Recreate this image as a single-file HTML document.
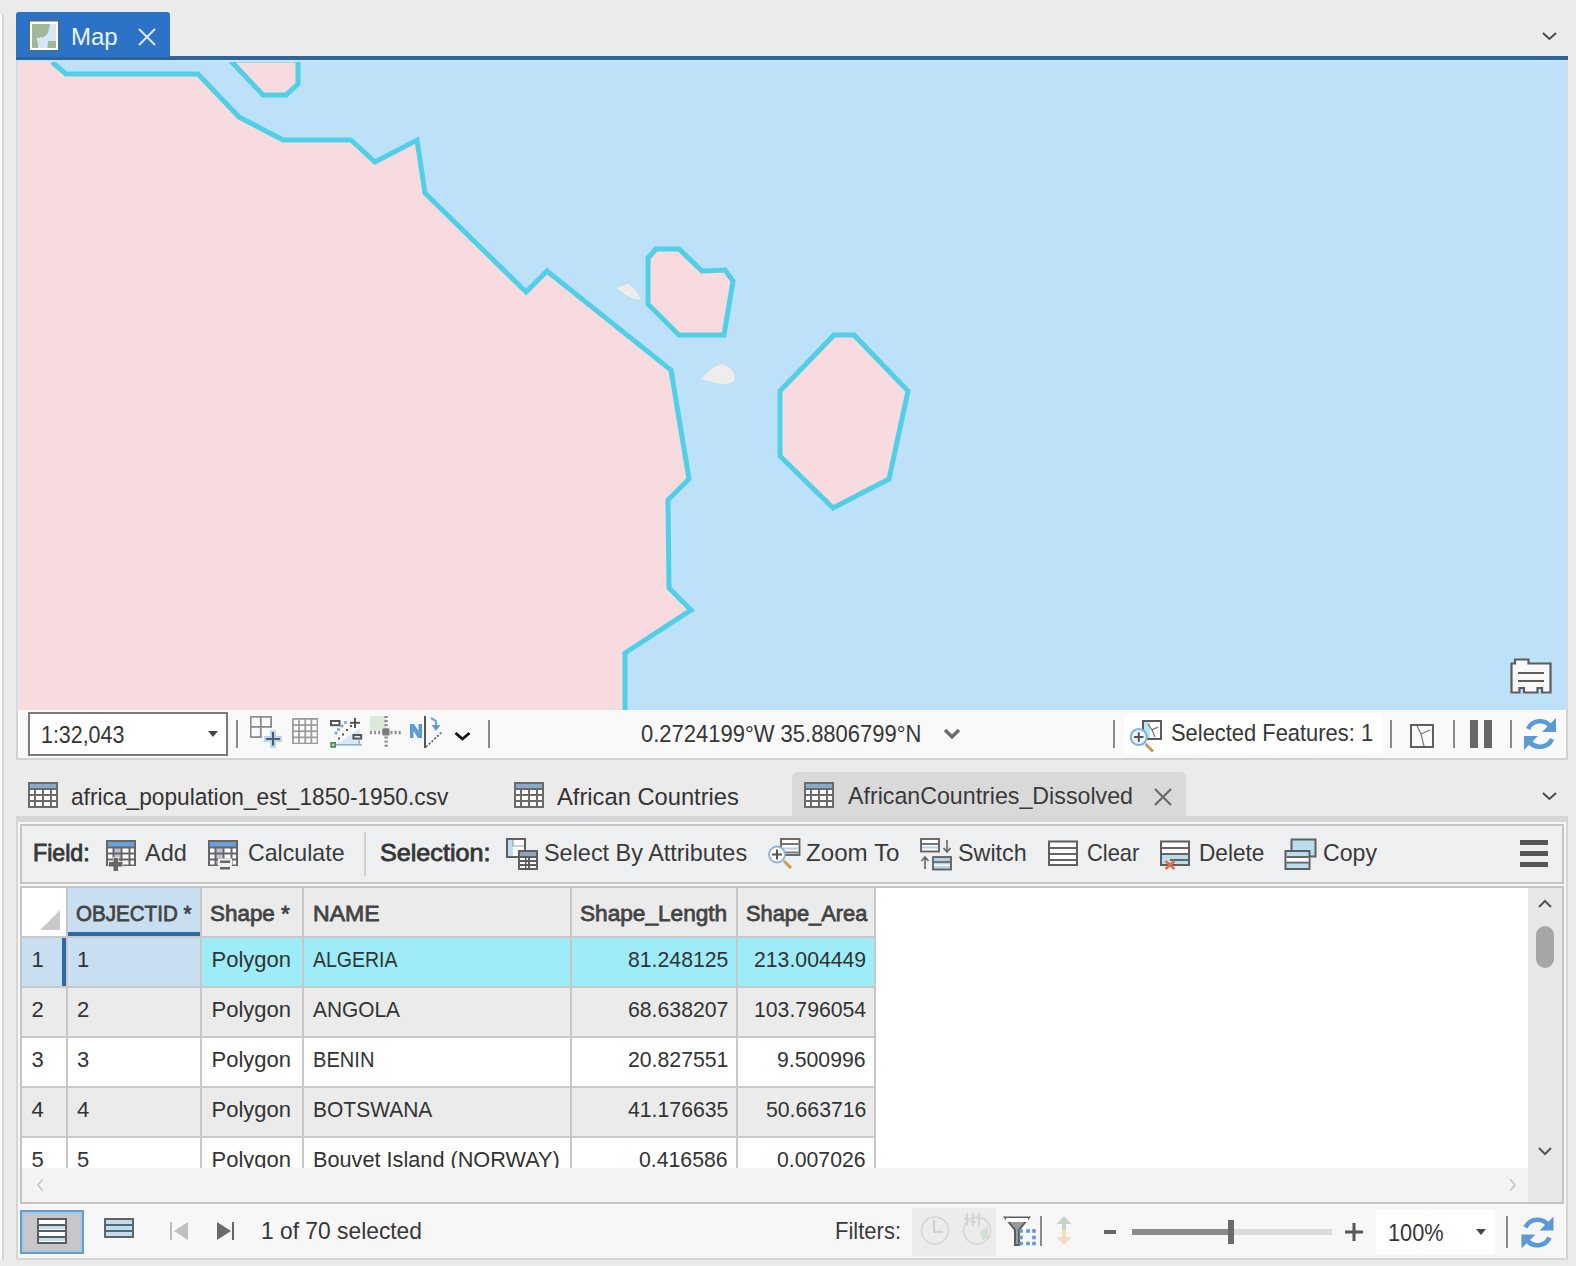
<!DOCTYPE html>
<html><head><meta charset="utf-8"><style>
html,body{margin:0;padding:0;width:1576px;height:1266px;overflow:hidden;background:#ebebeb;position:relative;font-family:"Liberation Sans",sans-serif;}
div{position:absolute;box-sizing:border-box;}
.t{position:absolute;white-space:pre;transform-origin:0 0;font-family:"Liberation Sans",sans-serif;}
svg{position:absolute;}
</style></head><body>
<div style="left:0px;top:14px;width:2px;height:1246px;background:#f8f8f8;"></div>
<div style="left:2px;top:14px;width:2px;height:1246px;background:#d5d5d5;"></div>
<div style="left:16px;top:56px;width:1552px;height:4px;background:#2f639c;"></div>
<div style="left:16px;top:12px;width:154px;height:46px;background:#2c72c6;border-radius:3px 3px 0 0;"></div>
<div style="left:16px;top:57px;width:154px;height:3px;background:#2f639c;"></div>
<svg style="position:absolute;left:0px;top:0px" width="64" height="60" viewBox="0 0 64 60"><rect x="28.5" y="18.5" width="31" height="33" fill="#4a6a92"/><rect x="30" y="21.5" width="28" height="28.5" fill="#fbfdff"/><rect x="32" y="24" width="24" height="24" fill="#9fb898"/><path d="M50,24 L56,24 L56,41 L48,41 L47.5,48 L38,48 L38,44 L36.5,38 L44,37 L48,33 Z" fill="#d6e6f6"/></svg>
<span class="t" style="left:71.00px;top:24.78px;font-size:24.5px;line-height:24.5px;color:#eef5fc;transform:scaleX(0.9792);">Map</span>
<svg style="position:absolute;left:137px;top:27px" width="20" height="20" viewBox="0 0 20 20"><path d="M2 2 L18 18 M18 2 L2 18" stroke="#dce8f6" stroke-width="2" fill="none"/></svg>
<svg style="position:absolute;left:1542px;top:32px" width="15" height="10" viewBox="0 0 15 10"><path d="M1 1 L7.5 7 L14 1" stroke="#4a4a4a" stroke-width="2" fill="none"/></svg>
<div style="left:16px;top:60px;width:1552px;height:650px;background:#d3dde6;"></div>
<div style="left:18px;top:60px;width:1548px;height:2px;background:#c6e6f8;"></div>
<svg style="position:absolute;left:18px;top:62px" width="1548" height="648" viewBox="18 62 1548 648">
<rect x="18" y="62" width="1548" height="648" fill="#bde1f9"/>
<polygon points="18,62 52,62 66,74 198,74 239,117 283,140 351,140 375,162 417,140 425,193 526,292 547,271 671,370 689,479 668,500 669,588 691,610 625,653 625,712 18,712" fill="#f7dbdf"/>
<polyline points="52,62 66,74 198,74 239,117 283,140 351,140 375,162 417,140 425,193 526,292 547,271 671,370 689,479 668,500 669,588 691,610 625,653 625,712" fill="none" stroke="#50cfe6" stroke-width="5" stroke-linejoin="miter"/>
<polygon points="230,60 263,95 286,95 298,84 298,60" fill="#f7dbdf" stroke="#50cfe6" stroke-width="5"/>
<polygon points="648,258 656,249 679,249 702,271 725,270 733,281 724,335 679,335 648,304" fill="#f7dbdf" stroke="#50cfe6" stroke-width="5"/>
<polygon points="834,335 854,335 908,391 889,479 833,508 780,456 780,391" fill="#f7dbdf" stroke="#50cfe6" stroke-width="5"/>
<path d="M616,288 L628,284 Q636,288 641,300 L633,299 Q624,294 616,288 Z" fill="#eeede9"/>
<path d="M701,379 Q712,366 722,364 Q735,368 735,380 Q728,386 716,383 Z" fill="#eeede9"/>
</svg>
<svg style="position:absolute;left:1510px;top:658px" width="42" height="36" viewBox="0 0 42 36"><path d="M1.5 5.5 H5 V1.5 H18.5 V5.5 H40.5 V34.5 H32 V30 H27.5 V34.5 H14 V30 H9.5 V34.5 H1.5 Z" fill="#f8f8f8" stroke="#5c5c5c" stroke-width="2.2"/><path d="M8 15 H34 M8 23 H34" stroke="#5c5c5c" stroke-width="2.2"/></svg>
<div style="left:16px;top:710px;width:1552px;height:50px;background:#d2d2d2;"></div>
<div style="left:18px;top:710px;width:1548px;height:48px;background:#f9f9f9;"></div>
<div style="left:28px;top:712px;width:200px;height:44px;background:#7a7a7a;"></div>
<div style="left:30px;top:714px;width:196px;height:40px;background:#ffffff;"></div>
<span class="t" style="left:41.00px;top:723.17px;font-size:24.5px;line-height:24.5px;color:#333;transform:scaleX(0.8737);">1:32,043</span>
<svg style="position:absolute;left:208px;top:731px" width="10" height="6" viewBox="0 0 10 6"><path d="M0 0 H10 L5 6 Z" fill="#444"/></svg>
<div style="left:236px;top:720px;width:2px;height:28px;background:#8a8a8a;"></div>
<div style="left:488px;top:720px;width:2px;height:28px;background:#8a8a8a;"></div>
<span class="t" style="left:641.00px;top:722.17px;font-size:24.5px;line-height:24.5px;color:#363636;transform:scaleX(0.8974);">0.2724199°W 35.8806799°N</span>
<svg style="position:absolute;left:943px;top:728px" width="18" height="12" viewBox="0 0 18 12"><path d="M2 2 L9 9 L16 2" stroke="#666" stroke-width="3.2" fill="none"/></svg>
<div style="left:1113px;top:720px;width:2px;height:28px;background:#8a8a8a;"></div>
<div style="left:1124px;top:714px;width:258px;height:40px;background:#ffffff;"></div>
<span class="t" style="left:1171.00px;top:720.67px;font-size:24.5px;line-height:24.5px;color:#363636;transform:scaleX(0.8938);">Selected Features: 1</span>
<div style="left:1390px;top:720px;width:2px;height:28px;background:#8a8a8a;"></div>
<div style="left:1453px;top:720px;width:2px;height:28px;background:#8a8a8a;"></div>
<div style="left:1510px;top:720px;width:2px;height:28px;background:#8a8a8a;"></div>
<div style="left:1470px;top:720px;width:8px;height:28px;background:#686868;"></div>
<div style="left:1484px;top:720px;width:8px;height:28px;background:#686868;"></div>
<div style="left:792px;top:772px;width:394px;height:44px;background:#d9d9d9;border-radius:5px 5px 0 0;"></div>
<svg style="position:absolute;left:28px;top:782px" width="30" height="26" viewBox="0 0 30 26"><rect x="0" y="0" width="30" height="26" fill="#6b6b6b"/><rect x="2" y="2" width="26" height="4" fill="#88a9c8"/><g fill="#fff"><rect x="2" y="8" width="4" height="4"/><rect x="8" y="8" width="6" height="4"/><rect x="16" y="8" width="6" height="4"/><rect x="24" y="8" width="4" height="4"/><rect x="2" y="14" width="4" height="4"/><rect x="8" y="14" width="6" height="4"/><rect x="16" y="14" width="6" height="4"/><rect x="24" y="14" width="4" height="4"/><rect x="2" y="20" width="4" height="4"/><rect x="8" y="20" width="6" height="4"/><rect x="16" y="20" width="6" height="4"/><rect x="24" y="20" width="4" height="4"/></g></svg>
<span class="t" style="left:71.00px;top:784.67px;font-size:24.5px;line-height:24.5px;color:#333;transform:scaleX(0.9265);">africa_population_est_1850-1950.csv</span>
<svg style="position:absolute;left:514px;top:782px" width="30" height="26" viewBox="0 0 30 26"><rect x="0" y="0" width="30" height="26" fill="#6b6b6b"/><rect x="2" y="2" width="26" height="4" fill="#88a9c8"/><g fill="#fff"><rect x="2" y="8" width="4" height="4"/><rect x="8" y="8" width="6" height="4"/><rect x="16" y="8" width="6" height="4"/><rect x="24" y="8" width="4" height="4"/><rect x="2" y="14" width="4" height="4"/><rect x="8" y="14" width="6" height="4"/><rect x="16" y="14" width="6" height="4"/><rect x="24" y="14" width="4" height="4"/><rect x="2" y="20" width="4" height="4"/><rect x="8" y="20" width="6" height="4"/><rect x="16" y="20" width="6" height="4"/><rect x="24" y="20" width="4" height="4"/></g></svg>
<span class="t" style="left:557.00px;top:784.67px;font-size:24.5px;line-height:24.5px;color:#333;transform:scaleX(0.9681);">African Countries</span>
<svg style="position:absolute;left:804px;top:782px" width="30" height="26" viewBox="0 0 30 26"><rect x="0" y="0" width="30" height="26" fill="#6b6b6b"/><rect x="2" y="2" width="26" height="4" fill="#88a9c8"/><g fill="#fff"><rect x="2" y="8" width="4" height="4"/><rect x="8" y="8" width="6" height="4"/><rect x="16" y="8" width="6" height="4"/><rect x="24" y="8" width="4" height="4"/><rect x="2" y="14" width="4" height="4"/><rect x="8" y="14" width="6" height="4"/><rect x="16" y="14" width="6" height="4"/><rect x="24" y="14" width="4" height="4"/><rect x="2" y="20" width="4" height="4"/><rect x="8" y="20" width="6" height="4"/><rect x="16" y="20" width="6" height="4"/><rect x="24" y="20" width="4" height="4"/></g></svg>
<span class="t" style="left:848.00px;top:784.17px;font-size:24.5px;line-height:24.5px;color:#3a3a3a;transform:scaleX(0.9468);">AfricanCountries_Dissolved</span>
<svg style="position:absolute;left:1153px;top:787px" width="20" height="20" viewBox="0 0 20 20"><path d="M2 2 L18 18 M18 2 L2 18" stroke="#6a6a6a" stroke-width="2.2" fill="none"/></svg>
<svg style="position:absolute;left:1542px;top:792px" width="15" height="10" viewBox="0 0 15 10"><path d="M1 1 L7.5 7 L14 1" stroke="#4a4a4a" stroke-width="2" fill="none"/></svg>
<div style="left:16px;top:816px;width:1552px;height:444px;background:#d4d6d8;"></div>
<div style="left:18px;top:822px;width:1548px;height:436px;background:#f7f7f7;"></div>
<div style="left:20px;top:824px;width:1544px;height:60px;background:#c4c4c4;"></div>
<div style="left:22px;top:826px;width:1540px;height:56px;background:#eeeff0;"></div>
<span class="t" style="left:33.00px;top:841.10px;font-size:24px;line-height:24px;color:#363636;-webkit-text-stroke:0.84px #363636;transform:scaleX(0.9661);">Field:</span>
<span class="t" style="left:145.00px;top:841.10px;font-size:24px;line-height:24px;color:#3a3a3a;transform:scaleX(0.9767);">Add</span>
<span class="t" style="left:247.50px;top:841.10px;font-size:24px;line-height:24px;color:#3a3a3a;transform:scaleX(0.9650);">Calculate</span>
<div style="left:364px;top:832px;width:2px;height:44px;background:#cfcfcf;"></div>
<span class="t" style="left:380.00px;top:841.10px;font-size:24px;line-height:24px;color:#363636;-webkit-text-stroke:0.84px #363636;transform:scaleX(1.0476);">Selection:</span>
<span class="t" style="left:544.00px;top:841.10px;font-size:24px;line-height:24px;color:#3a3a3a;transform:scaleX(0.9760);">Select By Attributes</span>
<span class="t" style="left:805.50px;top:841.10px;font-size:24px;line-height:24px;color:#3a3a3a;transform:scaleX(1.0054);">Zoom To</span>
<span class="t" style="left:958.00px;top:841.10px;font-size:24px;line-height:24px;color:#3a3a3a;transform:scaleX(0.9718);">Switch</span>
<span class="t" style="left:1087.00px;top:841.10px;font-size:24px;line-height:24px;color:#3a3a3a;transform:scaleX(0.9123);">Clear</span>
<span class="t" style="left:1199.00px;top:841.10px;font-size:24px;line-height:24px;color:#3a3a3a;transform:scaleX(0.9420);">Delete</span>
<span class="t" style="left:1323.00px;top:841.10px;font-size:24px;line-height:24px;color:#3a3a3a;transform:scaleX(0.9643);">Copy</span>
<div style="left:1520px;top:840px;width:28px;height:5px;background:#555;"></div>
<div style="left:1520px;top:851px;width:28px;height:5px;background:#555;"></div>
<div style="left:1520px;top:862px;width:28px;height:5px;background:#555;"></div>
<div style="left:20px;top:886px;width:1544px;height:318px;background:#c4c4c4;"></div>
<div style="left:22px;top:888px;width:1540px;height:314px;background:#f3f3f3;"></div>
<div style="left:22px;top:888px;width:1506px;height:280px;background:#ffffff;"></div>
<div style="left:1528px;top:888px;width:34px;height:314px;background:#e8e8e8;"></div>
<div style="left:1536px;top:926px;width:18px;height:42px;background:#a6a6a6;border-radius:9px;"></div>
<svg style="position:absolute;left:1538px;top:899px" width="14" height="10" viewBox="0 0 14 10"><path d="M1 8 L7 2 L13 8" stroke="#555" stroke-width="2" fill="none"/></svg>
<svg style="position:absolute;left:1538px;top:1146px" width="14" height="10" viewBox="0 0 14 10"><path d="M1 2 L7 8 L13 2" stroke="#555" stroke-width="2" fill="none"/></svg>
<div style="left:22px;top:888px;width:854px;height:48px;background:#c8c8c8;"></div>
<div style="left:22px;top:888px;width:44px;height:48px;background:#ffffff;"></div>
<svg style="position:absolute;left:40px;top:910px" width="20" height="20" viewBox="0 0 20 20"><path d="M0 20 L20 0 V20 Z" fill="#c9c9c9"/></svg>
<div style="left:68px;top:888px;width:132px;height:48px;background:#c8dff2;"></div>
<div style="left:68px;top:932px;width:132px;height:4px;background:#2f6aa6;"></div>
<div style="left:202px;top:888px;width:100px;height:48px;background:#ebebeb;"></div>
<div style="left:304px;top:888px;width:266px;height:48px;background:#ebebeb;"></div>
<div style="left:572px;top:888px;width:164px;height:48px;background:#ebebeb;"></div>
<div style="left:738px;top:888px;width:136px;height:48px;background:#ebebeb;"></div>
<div style="left:874px;top:888px;width:2px;height:48px;background:#c8c8c8;"></div>
<span class="t" style="left:76.00px;top:902.90px;font-size:22px;line-height:22px;color:#444;-webkit-text-stroke:0.77px #444;transform:scaleX(0.9355);">OBJECTID *</span>
<span class="t" style="left:209.50px;top:902.90px;font-size:22px;line-height:22px;color:#444;-webkit-text-stroke:0.77px #444;transform:scaleX(1.0190);">Shape *</span>
<span class="t" style="left:313.00px;top:902.90px;font-size:22px;line-height:22px;color:#444;-webkit-text-stroke:0.77px #444;transform:scaleX(1.0469);">NAME</span>
<span class="t" style="left:580.00px;top:902.90px;font-size:22px;line-height:22px;color:#444;-webkit-text-stroke:0.77px #444;transform:scaleX(1.0280);">Shape_Length</span>
<span class="t" style="left:746.00px;top:902.90px;font-size:22px;line-height:22px;color:#444;-webkit-text-stroke:0.77px #444;transform:scaleX(0.9919);">Shape_Area</span>
<div style="left:22px;top:936px;width:854px;height:52px;background:#c8c8c8;"></div>
<div style="left:22px;top:938px;width:44px;height:48px;background:#c8dff2;"></div>
<div style="left:68px;top:938px;width:132px;height:48px;background:#c8dff2;"></div>
<div style="left:202px;top:938px;width:100px;height:48px;background:#9decf8;"></div>
<div style="left:304px;top:938px;width:266px;height:48px;background:#9decf8;"></div>
<div style="left:572px;top:938px;width:164px;height:48px;background:#9decf8;"></div>
<div style="left:738px;top:938px;width:136px;height:48px;background:#9decf8;"></div>
<div style="left:62px;top:938px;width:4px;height:48px;background:#2f6aa6;"></div>
<span class="t" style="left:31.50px;top:949.00px;font-size:22px;line-height:22px;color:#333;">1</span>
<span class="t" style="left:77.00px;top:949.00px;font-size:22px;line-height:22px;color:#333;">1</span>
<span class="t" style="left:211.50px;top:949.00px;font-size:22px;line-height:22px;color:#333;">Polygon</span>
<span class="t" style="left:312.50px;top:949.00px;font-size:22px;line-height:22px;color:#333;transform:scaleX(0.8865);">ALGERIA</span>
<span class="t" style="left:627.64px;top:949.00px;font-size:22px;line-height:22px;color:#333;transform:scaleX(0.9650);">81.248125</span>
<span class="t" style="left:754.06px;top:949.00px;font-size:22px;line-height:22px;color:#333;transform:scaleX(0.9650);">213.004449</span>
<div style="left:22px;top:986px;width:854px;height:52px;background:#c8c8c8;"></div>
<div style="left:22px;top:988px;width:44px;height:48px;background:#ebebeb;"></div>
<div style="left:68px;top:988px;width:132px;height:48px;background:#ebebeb;"></div>
<div style="left:202px;top:988px;width:100px;height:48px;background:#ebebeb;"></div>
<div style="left:304px;top:988px;width:266px;height:48px;background:#ebebeb;"></div>
<div style="left:572px;top:988px;width:164px;height:48px;background:#ebebeb;"></div>
<div style="left:738px;top:988px;width:136px;height:48px;background:#ebebeb;"></div>
<span class="t" style="left:31.50px;top:999.00px;font-size:22px;line-height:22px;color:#333;">2</span>
<span class="t" style="left:77.00px;top:999.00px;font-size:22px;line-height:22px;color:#333;">2</span>
<span class="t" style="left:211.50px;top:999.00px;font-size:22px;line-height:22px;color:#333;">Polygon</span>
<span class="t" style="left:312.50px;top:999.00px;font-size:22px;line-height:22px;color:#333;transform:scaleX(0.9489);">ANGOLA</span>
<span class="t" style="left:627.64px;top:999.00px;font-size:22px;line-height:22px;color:#333;transform:scaleX(0.9650);">68.638207</span>
<span class="t" style="left:754.06px;top:999.00px;font-size:22px;line-height:22px;color:#333;transform:scaleX(0.9650);">103.796054</span>
<div style="left:22px;top:1036px;width:854px;height:52px;background:#c8c8c8;"></div>
<div style="left:22px;top:1038px;width:44px;height:48px;background:#ffffff;"></div>
<div style="left:68px;top:1038px;width:132px;height:48px;background:#ffffff;"></div>
<div style="left:202px;top:1038px;width:100px;height:48px;background:#ffffff;"></div>
<div style="left:304px;top:1038px;width:266px;height:48px;background:#ffffff;"></div>
<div style="left:572px;top:1038px;width:164px;height:48px;background:#ffffff;"></div>
<div style="left:738px;top:1038px;width:136px;height:48px;background:#ffffff;"></div>
<span class="t" style="left:31.50px;top:1049.00px;font-size:22px;line-height:22px;color:#333;">3</span>
<span class="t" style="left:77.00px;top:1049.00px;font-size:22px;line-height:22px;color:#333;">3</span>
<span class="t" style="left:211.50px;top:1049.00px;font-size:22px;line-height:22px;color:#333;">Polygon</span>
<span class="t" style="left:312.50px;top:1049.00px;font-size:22px;line-height:22px;color:#333;transform:scaleX(0.9134);">BENIN</span>
<span class="t" style="left:627.64px;top:1049.00px;font-size:22px;line-height:22px;color:#333;transform:scaleX(0.9650);">20.827551</span>
<span class="t" style="left:777.22px;top:1049.00px;font-size:22px;line-height:22px;color:#333;transform:scaleX(0.9650);">9.500996</span>
<div style="left:22px;top:1086px;width:854px;height:52px;background:#c8c8c8;"></div>
<div style="left:22px;top:1088px;width:44px;height:48px;background:#ebebeb;"></div>
<div style="left:68px;top:1088px;width:132px;height:48px;background:#ebebeb;"></div>
<div style="left:202px;top:1088px;width:100px;height:48px;background:#ebebeb;"></div>
<div style="left:304px;top:1088px;width:266px;height:48px;background:#ebebeb;"></div>
<div style="left:572px;top:1088px;width:164px;height:48px;background:#ebebeb;"></div>
<div style="left:738px;top:1088px;width:136px;height:48px;background:#ebebeb;"></div>
<span class="t" style="left:31.50px;top:1099.00px;font-size:22px;line-height:22px;color:#333;">4</span>
<span class="t" style="left:77.00px;top:1099.00px;font-size:22px;line-height:22px;color:#333;">4</span>
<span class="t" style="left:211.50px;top:1099.00px;font-size:22px;line-height:22px;color:#333;">Polygon</span>
<span class="t" style="left:312.50px;top:1099.00px;font-size:22px;line-height:22px;color:#333;transform:scaleX(0.9544);">BOTSWANA</span>
<span class="t" style="left:627.64px;top:1099.00px;font-size:22px;line-height:22px;color:#333;transform:scaleX(0.9650);">41.176635</span>
<span class="t" style="left:765.64px;top:1099.00px;font-size:22px;line-height:22px;color:#333;transform:scaleX(0.9650);">50.663716</span>
<div style="left:22px;top:1136px;width:854px;height:32px;background:#c8c8c8;"></div>
<div style="left:22px;top:1138px;width:44px;height:30px;background:#ffffff;"></div>
<div style="left:68px;top:1138px;width:132px;height:30px;background:#ffffff;"></div>
<div style="left:202px;top:1138px;width:100px;height:30px;background:#ffffff;"></div>
<div style="left:304px;top:1138px;width:266px;height:30px;background:#ffffff;"></div>
<div style="left:572px;top:1138px;width:164px;height:30px;background:#ffffff;"></div>
<div style="left:738px;top:1138px;width:136px;height:30px;background:#ffffff;"></div>
<span class="t" style="left:31.50px;top:1149.00px;font-size:22px;line-height:22px;color:#333;">5</span>
<span class="t" style="left:77.00px;top:1149.00px;font-size:22px;line-height:22px;color:#333;">5</span>
<span class="t" style="left:211.50px;top:1149.00px;font-size:22px;line-height:22px;color:#333;">Polygon</span>
<span class="t" style="left:312.50px;top:1149.00px;font-size:22px;line-height:22px;color:#333;transform:scaleX(0.9860);">Bouvet Island (NORWAY)</span>
<span class="t" style="left:639.22px;top:1149.00px;font-size:22px;line-height:22px;color:#333;transform:scaleX(0.9650);">0.416586</span>
<span class="t" style="left:777.22px;top:1149.00px;font-size:22px;line-height:22px;color:#333;transform:scaleX(0.9650);">0.007026</span>
<div style="left:22px;top:1168px;width:1506px;height:34px;background:#f3f3f3;"></div>
<svg style="position:absolute;left:36px;top:1178px" width="10" height="14" viewBox="0 0 10 14"><path d="M7 1 L2 7 L7 13" stroke="#c4c4c4" stroke-width="1.6" fill="none"/></svg>
<svg style="position:absolute;left:1508px;top:1178px" width="10" height="14" viewBox="0 0 10 14"><path d="M2 1 L7 7 L2 13" stroke="#c4c4c4" stroke-width="1.6" fill="none"/></svg>
<div style="left:20px;top:1210px;width:64px;height:44px;background:#6b9ac4;"></div>
<div style="left:22px;top:1212px;width:60px;height:40px;background:#a4cbed;"></div>
<div style="left:24px;top:1214px;width:56px;height:36px;background:#c6c6cb;"></div>
<svg style="position:absolute;left:37px;top:1218px" width="30" height="26" viewBox="0 0 30 26"><rect x="1" y="1" width="28" height="24" fill="#fff" stroke="#5c5c5c" stroke-width="2"/><rect x="2" y="7" width="26" height="4" fill="#bde0f0"/><rect x="2" y="19" width="26" height="4" fill="#bde0f0"/><path d="M2 7 H28 M2 13 H28 M2 19 H28" stroke="#5c5c5c" stroke-width="2"/></svg>
<svg style="position:absolute;left:104px;top:1218px" width="30" height="20" viewBox="0 0 30 20"><rect x="1" y="1" width="28" height="18" fill="#c6dcea" stroke="#5c6670" stroke-width="2"/><rect x="2" y="8" width="26" height="5" fill="#b6e0f6"/><path d="M2 7 H28 M2 13 H28" stroke="#5c6670" stroke-width="1.8"/></svg>
<svg style="position:absolute;left:170px;top:1222px" width="22" height="18" viewBox="0 0 22 18"><path d="M1 0 V18" stroke="#bbb" stroke-width="2"/><path d="M18 0 L4 9 L18 18 Z" fill="#c0c0c0"/></svg>
<svg style="position:absolute;left:216px;top:1222px" width="18" height="18" viewBox="0 0 18 18"><path d="M17 0 V18" stroke="#666" stroke-width="2"/><path d="M1 0 L15 9 L1 18 Z" fill="#6a6a6a"/></svg>
<span class="t" style="left:261.00px;top:1219.17px;font-size:24.5px;line-height:24.5px;color:#363636;transform:scaleX(0.9306);">1 of 70 selected</span>
<span class="t" style="left:834.50px;top:1218.97px;font-size:24.5px;line-height:24.5px;color:#3a3a3a;transform:scaleX(0.8986);">Filters:</span>
<div style="left:912px;top:1208px;width:84px;height:48px;background:#ececec;"></div>
<div style="left:1104px;top:1229.5px;width:12px;height:4.5px;background:#666;"></div>
<div style="left:1132px;top:1229px;width:200px;height:6px;background:#dcdcdc;"></div>
<div style="left:1132px;top:1229px;width:100px;height:6px;background:#8a8a8a;"></div>
<div style="left:1228px;top:1220px;width:6px;height:24px;background:#6a6a6a;"></div>
<svg style="position:absolute;left:1345px;top:1223px" width="18" height="18" viewBox="0 0 18 18"><path d="M0 9 H18 M9 0 V18" stroke="#555" stroke-width="3"/></svg>
<div style="left:1376px;top:1210px;width:119px;height:44px;background:#ffffff;"></div>
<span class="t" style="left:1388.00px;top:1220.77px;font-size:24.5px;line-height:24.5px;color:#363636;transform:scaleX(0.8889);">100%</span>
<svg style="position:absolute;left:1476px;top:1229px" width="10" height="6" viewBox="0 0 10 6"><path d="M0 0 H10 L5 6 Z" fill="#444"/></svg>
<div style="left:1506px;top:1216px;width:2px;height:32px;background:#8a8a8a;"></div>
<svg style="position:absolute;left:0;top:0" width="1576" height="1266"><rect x="250" y="716" width="22" height="1.7000000000000455" fill="#8c8c8c"/><rect x="250" y="716" width="1.5999999999999943" height="22" fill="#8c8c8c"/><rect x="259.9" y="716" width="1.8000000000000114" height="22" fill="#8c8c8c"/><rect x="250" y="726" width="22" height="1.7999999999999545" fill="#8c8c8c"/><rect x="270.2" y="716" width="1.8000000000000114" height="11.799999999999955" fill="#8c8c8c"/><rect x="250" y="736.2" width="11.699999999999989" height="1.7999999999999545" fill="#8c8c8c"/><rect x="264" y="736" width="18" height="5.7999999999999545" fill="#b9d4ec"/><rect x="270.2" y="730.3" width="5.800000000000011" height="17.5" fill="#b9d4ec"/><rect x="266" y="738" width="14" height="1.8999999999999773" fill="#4c5b6b"/><rect x="272" y="732" width="2" height="13.5" fill="#4c5b6b"/><rect x="292" y="718" width="26" height="26" fill="#9c9c9c"/><rect x="293.8" y="719.8" width="4.399999999999977" height="4.399999999999977" fill="#fdfdfd"/><rect x="293.8" y="725.9499999999999" width="4.399999999999977" height="4.399999999999977" fill="#fdfdfd"/><rect x="293.8" y="732.0999999999999" width="4.399999999999977" height="4.399999999999977" fill="#fdfdfd"/><rect x="293.8" y="738.25" width="4.399999999999977" height="4.399999999999977" fill="#fdfdfd"/><rect x="299.95" y="719.8" width="4.399999999999977" height="4.399999999999977" fill="#fdfdfd"/><rect x="299.95" y="725.9499999999999" width="4.399999999999977" height="4.399999999999977" fill="#fdfdfd"/><rect x="299.95" y="732.0999999999999" width="4.399999999999977" height="4.399999999999977" fill="#fdfdfd"/><rect x="299.95" y="738.25" width="4.399999999999977" height="4.399999999999977" fill="#fdfdfd"/><rect x="306.1" y="719.8" width="4.399999999999977" height="4.399999999999977" fill="#fdfdfd"/><rect x="306.1" y="725.9499999999999" width="4.399999999999977" height="4.399999999999977" fill="#fdfdfd"/><rect x="306.1" y="732.0999999999999" width="4.399999999999977" height="4.399999999999977" fill="#fdfdfd"/><rect x="306.1" y="738.25" width="4.399999999999977" height="4.399999999999977" fill="#fdfdfd"/><rect x="312.25" y="719.8" width="4.399999999999977" height="4.399999999999977" fill="#fdfdfd"/><rect x="312.25" y="725.9499999999999" width="4.399999999999977" height="4.399999999999977" fill="#fdfdfd"/><rect x="312.25" y="732.0999999999999" width="4.399999999999977" height="4.399999999999977" fill="#fdfdfd"/><rect x="312.25" y="738.25" width="4.399999999999977" height="4.399999999999977" fill="#fdfdfd"/><path d="M336,745 L360,745 L360,728 Z" fill="#d6eaf8"/><rect x="331" y="721" width="8.5" height="4.2" fill="none" stroke="#555" stroke-width="2"/><rect x="353.4" y="735" width="7.8" height="3.6" fill="none" stroke="#555" stroke-width="2"/><rect x="350" y="721.8" width="10" height="2.0" fill="#555"/><rect x="354" y="718" width="2" height="10" fill="#555"/><rect x="350" y="725" width="2" height="2" fill="#555"/><rect x="346" y="729" width="2" height="2" fill="#555"/><rect x="342" y="733.5" width="2" height="2.0" fill="#555"/><rect x="338" y="737.5" width="2" height="2.0" fill="#555"/><rect x="344.2" y="721.2" width="2.6000000000000227" height="2.599999999999909" fill="#6fa0d0"/><rect x="340.7" y="724.7" width="2.6000000000000227" height="2.599999999999909" fill="#6fa0d0"/><rect x="337.2" y="728.2" width="2.6000000000000227" height="2.599999999999909" fill="#6fa0d0"/><rect x="334.7" y="731.7" width="2.6000000000000227" height="2.599999999999909" fill="#6fa0d0"/><rect x="336" y="744" width="26" height="1.6000000000000227" fill="#8fb0cc"/><rect x="358.4" y="739" width="1.400000000000034" height="6" fill="#8fb0cc"/><rect x="330.3" y="742" width="5.699999999999989" height="5.7999999999999545" fill="#5c8a5c"/><rect x="332" y="743.7" width="2.3000000000000114" height="2.2999999999999545" fill="#b8d8b8"/><rect x="370" y="716" width="16" height="14.5" fill="#dfe9da"/><rect x="384.4" y="716.0" width="3.400000000000034" height="2.0" fill="#8c8c8c"/><rect x="384.4" y="720.1" width="3.400000000000034" height="2.0" fill="#8c8c8c"/><rect x="384.4" y="724.2" width="3.400000000000034" height="2.0" fill="#8c8c8c"/><rect x="384.4" y="728.3" width="3.400000000000034" height="2.0" fill="#8c8c8c"/><rect x="384.4" y="732.4" width="3.400000000000034" height="2.0" fill="#8c8c8c"/><rect x="384.4" y="736.5" width="3.400000000000034" height="2.0" fill="#8c8c8c"/><rect x="384.4" y="740.6" width="3.400000000000034" height="2.0" fill="#8c8c8c"/><rect x="384.4" y="744.7" width="3.400000000000034" height="2.0" fill="#8c8c8c"/><rect x="370.0" y="730.8" width="2.0" height="3.400000000000091" fill="#8c8c8c"/><rect x="374.1" y="730.8" width="2.0" height="3.400000000000091" fill="#8c8c8c"/><rect x="378.2" y="730.8" width="2.0" height="3.400000000000091" fill="#8c8c8c"/><rect x="382.3" y="730.8" width="2.0" height="3.400000000000091" fill="#8c8c8c"/><rect x="386.4" y="730.8" width="2.0" height="3.400000000000091" fill="#8c8c8c"/><rect x="390.5" y="730.8" width="2.0" height="3.400000000000091" fill="#8c8c8c"/><rect x="394.6" y="730.8" width="2.0" height="3.400000000000091" fill="#8c8c8c"/><rect x="398.7" y="730.8" width="2.0" height="3.400000000000091" fill="#8c8c8c"/><rect x="382.5" y="728.5" width="7.0" height="7.0" fill="#7a7a7a"/><path d="M410,738 V724 H414 L418.5,731 V724 H422 V738 H418 L413.5,731 V738 Z" fill="#5b9bd5"/><rect x="424" y="716" width="2" height="32" fill="#555"/><path d="M426,747 L442,732" stroke="#666" stroke-width="1.6" stroke-dasharray="2.2,1.6"/><path d="M431,718 L436,721 V728" stroke="#6fa3d8" stroke-width="2.2" fill="none"/><path d="M431.5,725 L436,731 L440.5,725 Z" fill="#5b9bd5"/><path d="M455.5,733 L462.5,739 L469.5,733" stroke="#111" stroke-width="2.8" fill="none"/><rect x="1142" y="720" width="20" height="20" fill="#5a5a5a"/><rect x="1144" y="722" width="16" height="16" fill="#ffffff"/><rect x="1144" y="722" width="6" height="16" fill="#bfe2f4"/><path d="M1148,724 L1152,730 L1158,727 M1152,730 L1155,737" stroke="#6a7a86" stroke-width="1.3" fill="none"/><circle cx="1138.8" cy="737" r="8" fill="#eaf6fd" stroke="#86b0d6" stroke-width="2.2"/><rect x="1134" y="736" width="9.5" height="2" fill="#555"/><rect x="1137.8" y="732.3" width="2.0" height="9.5" fill="#555"/><path d="M1145.5,744 L1153,751.5" stroke="#c59758" stroke-width="3"/><rect x="1411" y="725" width="22" height="22" fill="#fafafa" stroke="#5e5e5e" stroke-width="2"/><path d="M1417,726 L1421,734 L1430,730 M1421,734 L1424,746" stroke="#777" stroke-width="1.2" fill="none"/><g transform="translate(0,0)" fill="#5b9bd5"><path d="M1528,729 A13.2,13.2 0 0 1 1550.6,726.5" stroke="#5b9bd5" stroke-width="4.6" fill="none"/><path d="M1556,718 V732 H1542 Z"/><g transform="rotate(180 1540 734)"><path d="M1528,729 A13.2,13.2 0 0 1 1550.6,726.5" stroke="#5b9bd5" stroke-width="4.6" fill="none"/><path d="M1556,718 V732 H1542 Z"/></g></g><rect x="106" y="840" width="30" height="26" fill="#666"/><rect x="108" y="842" width="26" height="4.5" fill="#6aa0d8"/><rect x="108" y="848.5" width="4.5" height="4.0" fill="#ffffff"/><rect x="108" y="854.5" width="4.5" height="4.0" fill="#ffffff"/><rect x="108" y="860.5" width="4.5" height="4.0" fill="#ffffff"/><rect x="114.5" y="848.5" width="6.0" height="4.0" fill="#c2bfd2"/><rect x="114.5" y="854.5" width="6.0" height="4.0" fill="#c2bfd2"/><rect x="114.5" y="860.5" width="6.0" height="4.0" fill="#c2bfd2"/><rect x="122.5" y="848.5" width="6.0" height="4.0" fill="#ffffff"/><rect x="122.5" y="854.5" width="6.0" height="4.0" fill="#ffffff"/><rect x="122.5" y="860.5" width="6.0" height="4.0" fill="#ffffff"/><rect x="130.5" y="848.5" width="3.5" height="4.0" fill="#ffffff"/><rect x="130.5" y="854.5" width="3.5" height="4.0" fill="#ffffff"/><rect x="130.5" y="860.5" width="3.5" height="4.0" fill="#ffffff"/><path d="M113.5,858 H118 V862 H122.5 V866.5 H118 V871 H113.5 V866.5 H109 V862 H113.5 Z" fill="#666" stroke="#eef0f1" stroke-width="1.5" paint-order="stroke"/><rect x="208" y="840" width="30" height="26" fill="#666"/><rect x="210" y="842" width="26" height="4.5" fill="#6aa0d8"/><rect x="210" y="848.5" width="4.5" height="4.0" fill="#ffffff"/><rect x="210" y="854.5" width="4.5" height="4.0" fill="#ffffff"/><rect x="210" y="860.5" width="4.5" height="4.0" fill="#ffffff"/><rect x="216.5" y="848.5" width="6.0" height="4.0" fill="#c2bfd2"/><rect x="216.5" y="854.5" width="6.0" height="4.0" fill="#c2bfd2"/><rect x="216.5" y="860.5" width="6.0" height="4.0" fill="#c2bfd2"/><rect x="224.5" y="848.5" width="6.0" height="4.0" fill="#ffffff"/><rect x="224.5" y="854.5" width="6.0" height="4.0" fill="#ffffff"/><rect x="224.5" y="860.5" width="6.0" height="4.0" fill="#ffffff"/><rect x="232.5" y="848.5" width="3.5" height="4.0" fill="#ffffff"/><rect x="232.5" y="854.5" width="3.5" height="4.0" fill="#ffffff"/><rect x="232.5" y="860.5" width="3.5" height="4.0" fill="#ffffff"/><rect x="218" y="858.5" width="14" height="13.5" fill="#f0f0f0"/><rect x="220" y="860.5" width="10" height="2.5" fill="#666"/><rect x="220" y="867" width="10" height="2.5" fill="#666"/><rect x="507" y="839" width="18" height="18" fill="#fff" stroke="#5e5e5e" stroke-width="2"/><rect x="508" y="840" width="5" height="16" fill="#b9e0f6"/><path d="M513,840 V846 H524" stroke="#8aa" stroke-width="1.2" fill="none"/><rect x="518" y="850" width="20" height="20" fill="#5e5e5e"/><rect x="520" y="852" width="16" height="4" fill="#87a6c6"/><rect x="520" y="858" width="5" height="2" fill="#fff"/><rect x="526.5" y="858" width="1.5" height="2" fill="#fff"/><rect x="530" y="858" width="6" height="2" fill="#fff"/><rect x="520" y="862" width="5" height="2" fill="#fff"/><rect x="526.5" y="862" width="1.5" height="2" fill="#fff"/><rect x="530" y="862" width="6" height="2" fill="#fff"/><rect x="520" y="866" width="5" height="2" fill="#fff"/><rect x="526.5" y="866" width="1.5" height="2" fill="#fff"/><rect x="530" y="866" width="6" height="2" fill="#fff"/><rect x="781" y="839" width="18.5" height="16" fill="#fff" stroke="#5e5e5e" stroke-width="1.8"/><rect x="782" y="843" width="16.5" height="2" fill="#777"/><rect x="782" y="847.5" width="16.5" height="2.0" fill="#b6d0e4"/><rect x="782" y="851.5" width="16.5" height="2.0" fill="#777"/><circle cx="777" cy="854.5" r="8" fill="#fbfdff" stroke="#8fb5d8" stroke-width="2"/><rect x="772" y="853.5" width="10" height="2.0" fill="#555"/><rect x="776" y="849.5" width="2" height="10.0" fill="#555"/><path d="M784,861 L791,868" stroke="#c99b5c" stroke-width="3"/><rect x="921" y="839" width="18" height="12.5" fill="#fff" stroke="#5e5e5e" stroke-width="1.8"/><rect x="922" y="843" width="16" height="2" fill="#777"/><rect x="922" y="846.5" width="16" height="2.0" fill="#b6d0e4"/><rect x="933" y="857" width="18" height="12.5" fill="#b6d0e4" stroke="#5e5e5e" stroke-width="1.8"/><rect x="934" y="861" width="16" height="2" fill="#777"/><rect x="934" y="864.5" width="16" height="1.5" fill="#fff"/><path d="M947,840 V852 M943.5,848 L947,852 L950.5,848" stroke="#666" stroke-width="1.6" fill="none"/><path d="M925,869 V857 M921.5,861 L925,857 L928.5,861" stroke="#666" stroke-width="1.6" fill="none"/><rect x="1049" y="841.5" width="28" height="23.5" fill="#fff" stroke="#5e5e5e" stroke-width="2"/><rect x="1050" y="847" width="26" height="2" fill="#666"/><rect x="1050" y="853" width="26" height="2" fill="#666"/><rect x="1050" y="859" width="26" height="2" fill="#666"/><rect x="1161" y="841.5" width="28" height="23.5" fill="#fff" stroke="#5e5e5e" stroke-width="2"/><rect x="1162" y="847" width="26" height="2" fill="#666"/><rect x="1162" y="853.5" width="26" height="10.5" fill="#b9dcef"/><rect x="1162" y="853" width="26" height="2" fill="#666"/><rect x="1170" y="859" width="18" height="2" fill="#666"/><path d="M1165.5,861 L1174.5,869 M1174.5,861 L1165.5,869" stroke="#d9704a" stroke-width="2.6"/><rect x="1291.5" y="839.5" width="24" height="17" fill="#b9dcef" stroke="#5e5e5e" stroke-width="2"/><rect x="1285.5" y="851" width="24" height="18" fill="#b9dcef" stroke="#5e5e5e" stroke-width="2"/><rect x="1286.5" y="856" width="22.0" height="2" fill="#666"/><rect x="1286.5" y="861.5" width="22.0" height="2.0" fill="#666"/><rect x="1286.5" y="858" width="22.0" height="3.5" fill="#fff"/><circle cx="935" cy="1230.5" r="13.5" fill="none" stroke="#d6d6d6" stroke-width="1.6"/><path d="M934,1220 V1232 H943" stroke="#cfcfcf" stroke-width="2" fill="none"/><circle cx="977" cy="1230.5" r="13.5" fill="none" stroke="#d6d6d6" stroke-width="1.6"/><path d="M967,1213 V1226 M973,1213 V1226 M979,1213 V1226 M964,1219 H970 M970,1222 H976 M976,1218 H982" stroke="#cfd4cf" stroke-width="1.6" fill="none"/><path d="M980,1232 L988,1226 V1238 L982,1240 Z" fill="#d6ddd6"/><path d="M1005,1217.5 H1029 L1019,1230 V1245 H1015 V1230 Z" fill="#9a9a9a" stroke="#5c5c5c" stroke-width="2" stroke-linejoin="miter"/><rect x="1006" y="1218" width="22" height="4" fill="#fff"/><rect x="1019.2" y="1229.2" width="3.599999999999909" height="3.599999999999909" fill="#5b9bd5"/><rect x="1026.2" y="1229.2" width="3.599999999999909" height="3.599999999999909" fill="#5b9bd5"/><rect x="1032.2" y="1229.2" width="3.599999999999909" height="3.599999999999909" fill="#5b9bd5"/><rect x="1019.2" y="1235.7" width="3.599999999999909" height="3.599999999999909" fill="#5b9bd5"/><rect x="1032.2" y="1235.7" width="3.599999999999909" height="3.599999999999909" fill="#5b9bd5"/><rect x="1019.2" y="1241.7" width="3.599999999999909" height="3.599999999999909" fill="#5b9bd5"/><rect x="1026.2" y="1241.7" width="3.599999999999909" height="3.599999999999909" fill="#5b9bd5"/><rect x="1032.2" y="1241.7" width="3.599999999999909" height="3.599999999999909" fill="#5b9bd5"/><rect x="1040" y="1216" width="2" height="30" fill="#8a8a8a"/><path d="M1064,1216 L1071.5,1224 H1066 V1231 H1062 V1224 H1056.5 Z" fill="#c5d5c8"/><path d="M1064,1245 L1071.5,1237 H1066 V1230 H1062 V1237 H1056.5 Z" fill="#f3dcc0"/><g transform="translate(-2.5,498.5)" fill="#5b9bd5"><path d="M1528,729 A13.2,13.2 0 0 1 1550.6,726.5" stroke="#5b9bd5" stroke-width="4.6" fill="none"/><path d="M1556,718 V732 H1542 Z"/><g transform="rotate(180 1540 734)"><path d="M1528,729 A13.2,13.2 0 0 1 1550.6,726.5" stroke="#5b9bd5" stroke-width="4.6" fill="none"/><path d="M1556,718 V732 H1542 Z"/></g></g></svg>
</body></html>
